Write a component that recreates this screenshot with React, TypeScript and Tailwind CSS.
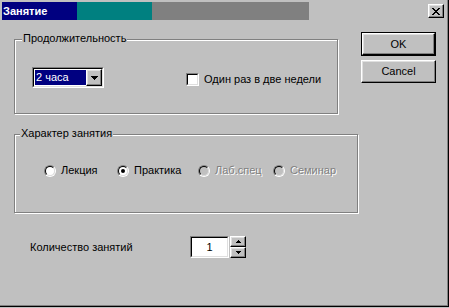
import React from "react";

const raised =
  "border border-t-white border-l-white border-r-black border-b-black shadow-[inset_-1px_-1px_0_#808080,inset_1px_1px_0_#dfdfdf]";

function Sunken({ className, children }: { className: string; children?: React.ReactNode }) {
  return (
    <div className={"border border-t-[#808080] border-l-[#808080] border-r-white border-b-white " + className}>
      <div className="w-full h-full border border-t-black border-l-black border-r-[#dfdfdf] border-b-[#dfdfdf] bg-white">
        {children}
      </div>
    </div>
  );
}

function Radio({ checked, disabled, label, w }: { checked?: boolean; disabled?: boolean; label: string; w: string }) {
  return (
    <div className={"flex items-center " + w}>
      <div className="w-[12px] h-[12px] rounded-full border border-t-[#808080] border-l-[#808080] border-r-white border-b-white">
        <div
          className={
            "w-full h-full rounded-full border border-t-black border-l-black border-r-[#dfdfdf] border-b-[#dfdfdf] flex items-center justify-center " +
            (disabled ? "bg-[#c0c0c0]" : "bg-white")
          }
        >
          {checked && <div className="w-[4px] h-[4px] rounded-full bg-black" />}
        </div>
      </div>
      <span
        className={
          "ml-[5px] text-[11px] leading-[13px] " +
          (disabled ? "text-[#808080] [text-shadow:1px_1px_0_#fff]" : "text-black")
        }
      >
        {label}
      </span>
    </div>
  );
}

export default function App() {
  return (
    <div className="w-[449px] h-[308px] bg-[#c0c0c0] overflow-hidden font-['Liberation_Sans',Arial,sans-serif] text-black">
      <div className="w-[449px] h-[307px] border-r border-b border-black">
        <div className="w-full h-full border-r border-b border-[#808080] pt-[2px] pl-[2px]">
          {/* title bar */}
          <div className="flex h-[18px] items-center">
            <div className="w-[75px] h-full bg-[#000080] text-white font-bold text-[11px] leading-[18px] pl-[1px]">
              Занятие
            </div>
            <div className="w-[75px] h-full bg-[#008080]" />
            <div className="w-[157px] h-full bg-[#808080]" />
            <div className="flex-1" />
            <div className={"w-[16px] h-[14px] mr-[3px] flex items-center justify-center bg-[#c0c0c0] " + raised}>
              <svg width="8" height="7" viewBox="0 0 8 7" shapeRendering="crispEdges">
                <path d="M0 0h2v1H0zM6 0h2v1H6zM1 1h2v1H1zM5 1h2v1H5zM2 2h4v1H2zM3 3h2v1H3zM2 4h4v1H2zM1 5h2v1H1zM5 5h2v1H5zM0 6h2v1H0zM6 6h2v1H6z" fill="#000" />
              </svg>
            </div>
          </div>

          {/* content */}
          <div className="flex">
            <div className="w-[356px] pl-[12px]">
              {/* group 1 */}
              <div className="relative mt-[19px] w-[324px] h-[75px] border border-[#808080] shadow-[inset_1px_1px_0_#fff,1px_1px_0_#fff]">
                <span className="absolute left-[7px] top-[-8px] bg-[#c0c0c0] px-[1px] text-[11px] leading-[13px]">
                  Продолжительность
                </span>
                <div className="flex items-start pt-[27px] pl-[17px]">
                  <Sunken className="w-[72px] h-[21px]">
                    <div className="flex h-full">
                      <div className="ml-[1px] mt-[1px] w-[51px] h-[15px] bg-[#000080] text-white text-[11px] leading-[15px] pl-[1px]">
                        2 часа
                      </div>
                      <div className={"ml-auto w-[16px] h-full bg-[#c0c0c0] flex items-center justify-center " + raised}>
                        <svg width="7" height="4" viewBox="0 0 7 4" shapeRendering="crispEdges">
                          <path d="M0 0h7v1H0zM1 1h5v1H1zM2 2h3v1H2zM3 3h1v1H3z" fill="#000" />
                        </svg>
                      </div>
                    </div>
                  </Sunken>
                  <div className="flex items-center ml-[82px] mt-[6px]">
                    <Sunken className="w-[13px] h-[13px]" />
                    <span className="ml-[5px] text-[11px] leading-[13px]">Один раз в две недели</span>
                  </div>
                </div>
              </div>

              {/* group 2 */}
              <div className="relative mt-[20px] w-[344px] h-[79px] border border-[#808080] shadow-[inset_1px_1px_0_#fff,1px_1px_0_#fff]">
                <span className="absolute left-[5px] top-[-8px] bg-[#c0c0c0] px-[1px] text-[11px] leading-[13px]">
                  Характер занятия
                </span>
                <div className="flex pt-[29px] pl-[29px]">
                  <Radio label="Лекция" w="w-[73px]" />
                  <Radio label="Практика" checked w="w-[81px]" />
                  <Radio label="Лаб.спец" disabled w="w-[75px]" />
                  <Radio label="Семинар" disabled w="w-[80px]" />
                </div>
              </div>

              {/* bottom row */}
              <div className="flex items-center mt-[23px] pl-[16px]">
                <span className="w-[160px] text-[11px] leading-[13px]">Количество занятий</span>
                <Sunken className="w-[39px] h-[22px]">
                  <div className="h-full flex items-center justify-center text-[11px]">1</div>
                </Sunken>
                <div className="flex flex-col ml-[1px]">
                  <div className={"w-[16px] h-[11px] bg-[#c0c0c0] flex items-center justify-center " + raised}>
                    <svg width="5" height="3" viewBox="0 0 5 3" shapeRendering="crispEdges">
                      <path d="M2 0h1v1H2zM1 1h3v1H1zM0 2h5v1H0z" fill="#000" />
                    </svg>
                  </div>
                  <div className={"w-[16px] h-[11px] bg-[#c0c0c0] flex items-center justify-center " + raised}>
                    <svg width="5" height="3" viewBox="0 0 5 3" shapeRendering="crispEdges">
                      <path d="M0 0h5v1H0zM1 1h3v1H1zM2 2h1v1H2z" fill="#000" />
                    </svg>
                  </div>
                </div>
              </div>
            </div>

            {/* buttons */}
            <div className="ml-[3px] pt-[12px] flex flex-col">
              <div className="w-[75px] h-[24px] border border-black">
                <div className={"w-full h-full flex items-center justify-center text-[11px] bg-[#c0c0c0] " + raised}>
                  OK
                </div>
              </div>
              <div className={"mt-[4px] w-[75px] h-[23px] flex items-center justify-center text-[11px] bg-[#c0c0c0] " + raised}>
                Cancel
              </div>
            </div>
          </div>
        </div>
      </div>
    </div>
  );
}
